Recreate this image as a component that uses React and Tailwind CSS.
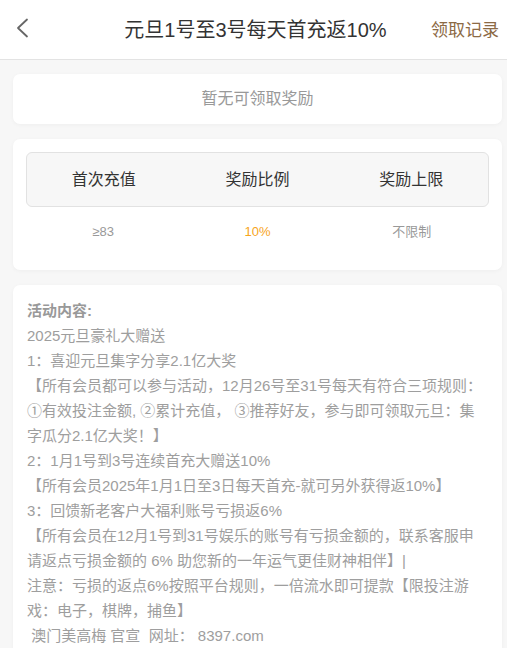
import React from 'react';

const lines = [
  { text: '活动内容:', bold: true },
  { text: '2025元旦豪礼大赠送' },
  { text: '1：喜迎元旦集字分享2.1亿大奖' },
  { text: '【所有会员都可以参与活动，12月26号至31号每天有符合三项规则：' },
  { text: '①有效投注金额, ②累计充值， ③推荐好友，参与即可领取元旦：集' },
  { text: '字瓜分2.1亿大奖！】' },
  { text: '2：1月1号到3号连续首充大赠送10%' },
  { text: '【所有会员2025年1月1日至3日每天首充-就可另外获得返10%】' },
  { text: '3：回馈新老客户大福利账号亏损返6%' },
  { text: '【所有会员在12月1号到31号娱乐的账号有亏损金额的，联系客服申' },
  { text: '请返点亏损金额的 6% 助您新的一年运气更佳财神相伴】|' },
  { text: '注意：亏损的返点6%按照平台规则，一倍流水即可提款【限投注游' },
  { text: '戏：电子，棋牌，捕鱼】' },
  { text: '\u00a0澳门美高梅 官宣  网址： 8397.com' },
];

const columns = [
  { title: '首次充值', value: '≥83', color: 'text-[#999999]' },
  { title: '奖励比例', value: '10%', color: 'text-[#f7a51c]' },
  { title: '奖励上限', value: '不限制', color: 'text-[#999999]' },
];

function App() {
  return (
    <div className="min-h-screen bg-[#f7f7f7] font-['Liberation_Sans','Noto_Sans_CJK_SC',sans-serif]">
      {/* header */}
      <div className="h-[60px] bg-white border-b border-[#e3e3e3] flex items-center relative">
        <button className="absolute left-[12px] top-[16px] w-[20px] h-[24px] flex items-center justify-center">
          <svg width="14" height="20" viewBox="0 0 14 20" fill="none">
            <path d="M12 1.5 L3 10 L12 18.5" stroke="#666666" strokeWidth="1.8" strokeLinecap="round" strokeLinejoin="round" />
          </svg>
        </button>
        <h1 className="flex-1 text-center text-[20px] text-[#333333] pl-[4px]">元旦1号至3号每天首充返10%</h1>
        <span className="absolute right-[8px] top-[18px] text-[17px] text-[#8c6a45]">领取记录</span>
      </div>

      <div className="pl-[13px] pr-[5px] pt-[14px] flex flex-col gap-[15px]">
        {/* no reward */}
        <div className="h-[50px] bg-white rounded-[7px] flex items-center justify-center shadow-[0_1px_4px_rgba(0,0,0,0.04)]">
          <span className="text-[16px] text-[#999999]">暂无可领取奖励</span>
        </div>

        {/* reward table */}
        <div className="bg-white rounded-[7px] px-[13px] pt-[13px] pb-[13px] shadow-[0_1px_4px_rgba(0,0,0,0.04)]">
          <div className="h-[55px] bg-[#f7f7f7] border border-[#e2e2e2] rounded-[6px] grid grid-cols-3 items-center">
            {columns.map((c) => (
              <div key={c.title} className="text-center text-[16px] text-[#333333]">{c.title}</div>
            ))}
          </div>
          <div className="h-[50px] grid grid-cols-3 items-center">
            {columns.map((c) => (
              <div key={c.title} className={`text-center text-[13px] ${c.color}`}>{c.value}</div>
            ))}
          </div>
        </div>

        {/* content */}
        <div className="bg-white rounded-t-[7px] pl-[14px] pr-[10px] pt-[13px] pb-[20px] shadow-[0_1px_4px_rgba(0,0,0,0.04)]">
          {lines.map((l, i) => (
            <div
              key={i}
              className={`whitespace-pre leading-[25px] text-[15px] ${l.bold ? 'font-bold text-[#999999]' : 'text-[#9e9e9e]'}`}
            >
              {l.text}
            </div>
          ))}
        </div>
      </div>
    </div>
  );
}

export default App;
